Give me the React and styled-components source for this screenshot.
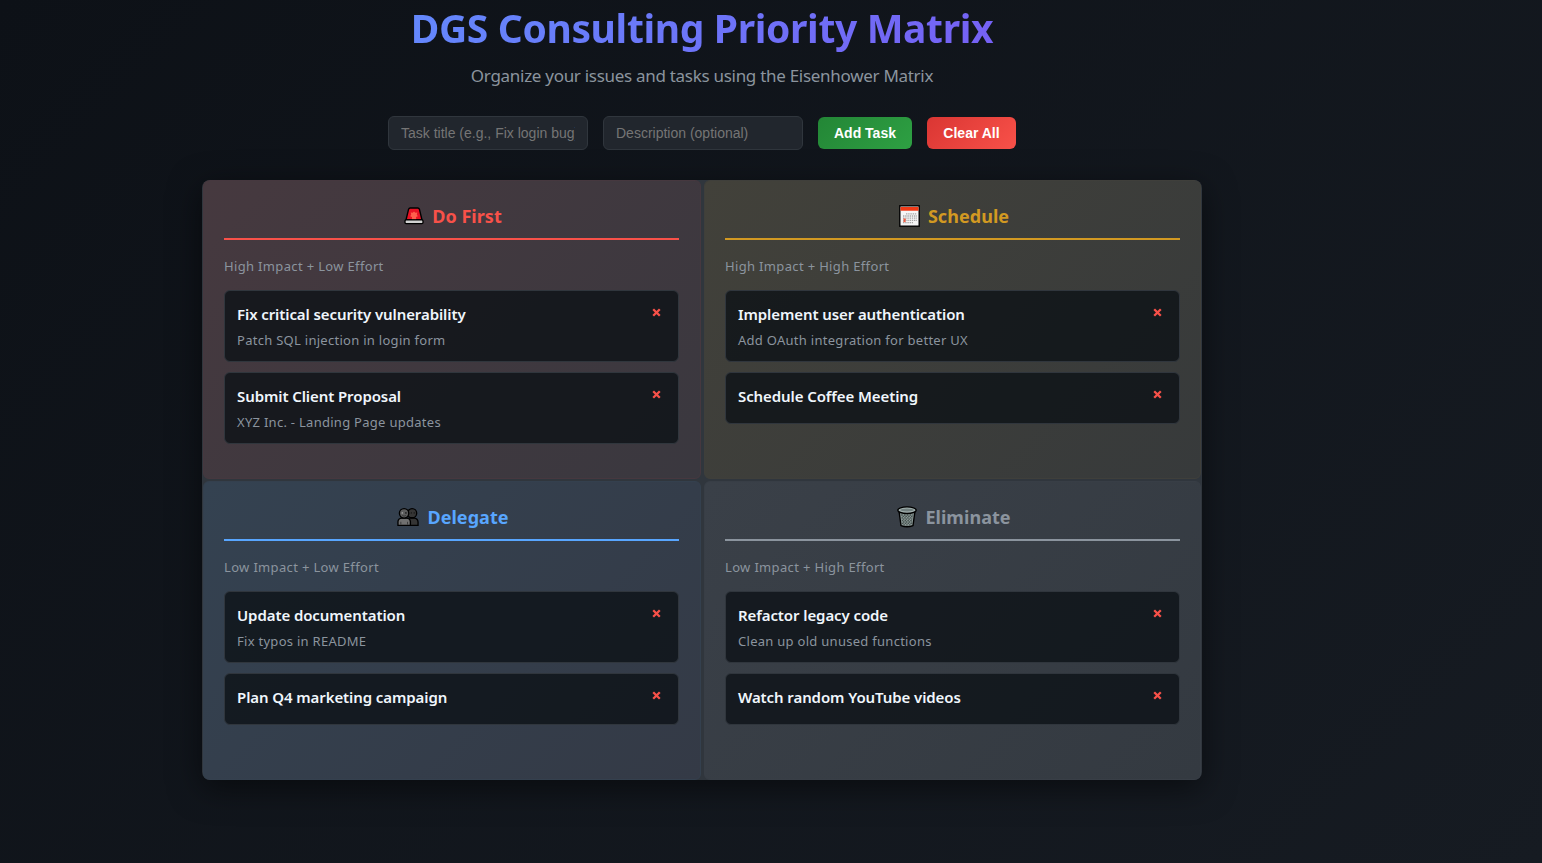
import React from "react";
import styled, { createGlobalStyle } from "styled-components";

const GlobalStyle = createGlobalStyle`
  * { box-sizing: border-box; }
  body {
    margin: 0;
    background: #11161d;
    color: #f0f6fc;
    font-family: "Noto Sans", "Open Sans", sans-serif;
  }
`;

const Page = styled.div`
  min-height: 863px;
  background: linear-gradient(135deg, #0d1117 0%, #161b22 100%);
`;

const Container = styled.main`
  width: 1404px;
  display: flex;
  flex-direction: column;
  align-items: center;
`;

const Title = styled.h1`
  margin: 0;
  width: 1000px;
  height: 60px;
  line-height: 56px;
  font-size: 39px;
  font-weight: 700;
  letter-spacing: -0.36px;
  text-align: center;
  white-space: nowrap;
  background: linear-gradient(135deg, #5d97ff 0%, #7c52f1 100%);
  background-clip: text;
  -webkit-background-clip: text;
  color: transparent;
`;

const Subtitle = styled.p`
  margin: 0 0 24px;
  height: 32px;
  line-height: 32px;
  font-size: 17px;
  letter-spacing: -0.29px;
  color: #8b949e;
  white-space: nowrap;
`;

const Controls = styled.form`
  display: flex;
  align-items: center;
  gap: 15px;
  margin: 0 0 30px;
`;

const Field = styled.input`
  width: 200px;
  height: 34px;
  padding: 0 12px;
  border: 1px solid #30363d;
  border-radius: 6px;
  background: #21262d;
  color: #f0f6fc;
  font-family: "Liberation Sans", Arial, sans-serif;
  font-size: 14px;
  outline: none;
  &::placeholder { color: #757575; opacity: 1; }
`;

const Button = styled.button`
  width: ${(p) => p.$width}px;
  height: 32px;
  padding: 0;
  border: 0;
  border-radius: 6px;
  background: linear-gradient(135deg, ${(p) => p.$from}, ${(p) => p.$to});
  color: #fff;
  font-family: "Liberation Sans", Arial, sans-serif;
  font-size: 14px;
  font-weight: 700;
  white-space: nowrap;
`;

const Matrix = styled.section`
  width: 1000px;
  height: 600px;
  display: grid;
  grid-template-columns: 498px 497px;
  grid-template-rows: 299px 299px;
  gap: 2px 3px;
  padding: 0 1px;
  border-radius: 8px;
  overflow: hidden;
  background: #30363d;
  box-shadow: 0 8px 32px rgba(0, 0, 0, 0.5);
`;

const Quadrant = styled.article`
  min-width: 0;
  padding: 21px 20px 20px;
  border: 1px solid ${(p) => p.$edge};
  border-radius: 6px;
  background: linear-gradient(135deg, ${(p) => p.$from}, ${(p) => p.$to});
  &:nth-child(odd) { padding-right: 21px; }
`;

const Heading = styled.h2`
  display: flex;
  align-items: center;
  justify-content: center;
  gap: 8px;
  height: 38px;
  margin: 0 0 15px;
  padding: 0 0 9px 3px;
  border-bottom: 2px solid ${(p) => p.$color};
  color: ${(p) => p.$color};
  font-size: 18px;
  font-weight: 700;
  line-height: 26px;
  letter-spacing: 0.05px;
  white-space: nowrap;
`;

const Hint = styled.p`
  margin: 0 0 13px;
  height: 22px;
  line-height: 22px;
  font-size: 13px;
  letter-spacing: 0.34px;
  color: #8b949e;
  white-space: nowrap;
`;

const Tasks = styled.div`
  display: flex;
  flex-direction: column;
  gap: 10.5px;
`;

const Card = styled.div`
  display: flex;
  justify-content: space-between;
  align-items: flex-start;
  height: ${(p) => (p.$tall ? 71.5 : 51.5)}px;
  padding: 11px 17.5px 0 12px;
  border: 1px solid #30363d;
  border-radius: 6px;
  background: rgba(13, 17, 23, 0.8);
`;

const TaskTitle = styled.div`
  height: 24px;
  line-height: 24px;
  font-size: 15px;
  font-weight: 600;
  letter-spacing: -0.09px;
  color: #f0f6fc;
  white-space: nowrap;
`;

const TaskNote = styled.div`
  margin-top: 2px;
  height: 24px;
  line-height: 24px;
  font-size: 13px;
  letter-spacing: 0.28px;
  color: #8b949e;
  white-space: nowrap;
`;

const Remove = styled.button`
  display: flex;
  margin-top: 5.5px;
  padding: 0;
  border: 0;
  background: none;
  color: #f85149;
`;

const Siren = () => (
  <svg width="20" height="18" viewBox="0 0 20 18">
    <path d="M4.6 2.2Q5 1 6.2 1h7.6q1.2 0 1.6 1.2L18 13H2z" fill="#e81224" stroke="#000" strokeWidth="1.4" strokeLinejoin="round" />
    <path d="M10 4.6l1.3 1.2 2-.2-.5 2 1 1.6-1.8.8.2 2.6H7.8l.2-2.6-1.8-.8 1-1.6-.5-2 2 .2z" fill="#ff5f4c" />
    <rect x="1" y="12.9" width="18" height="3.7" rx="1" fill="#d2d2d2" stroke="#000" strokeWidth="1.3" />
  </svg>
);

const Calendar = () => (
  <svg width="21" height="22" viewBox="0 0 21 22">
    <rect x=".8" y=".8" width="19.4" height="20.4" fill="#f5f5f5" stroke="#000" strokeWidth="1.4" />
    <path d="M1.5 2h18v3.8h-18z" fill="#f03a17" />
    <path d="M7 8.8h11M4 11h14M4 13.2h14M4 15.4h14M4 17.6h10" stroke="#a7a7a7" strokeWidth="1.3" strokeDasharray="1.4 .8" />
    <path d="M4.2 13.8l2.8 2.8M7 13.8l-2.8 2.8M5.6 13.4v3.8" stroke="#f0583d" strokeWidth="1" />
  </svg>
);

const People = () => (
  <svg width="22" height="20" viewBox="0 0 23 20">
    <g stroke="#000" strokeWidth="1.4">
      <path d="M9 18.8v-4q0-3 3-3.6h6q3.8.4 4 4v3.6z" fill="#353535" />
      <circle cx="15.8" cy="6" r="4.8" fill="#353535" />
      <path d="M1 18.8v-4q.2-3.3 4-3.6h5q3.8.3 4 3.6v4z" fill="#707070" />
      <circle cx="7.4" cy="6.2" r="4.9" fill="#5c5c5c" />
    </g>
    <circle cx="5.6" cy="5.7" r=".9" fill="#9a9a9a" />
    <circle cx="9.3" cy="5.7" r=".9" fill="#222" />
    <circle cx="15" cy="5.7" r=".7" fill="#111" />
    <circle cx="18" cy="5.7" r=".7" fill="#111" />
    <path d="M5.5 8.4q1.9 1.5 3.8 0M4 15v3M11 15v3" stroke="#333" strokeWidth=".9" fill="none" />
  </svg>
);

const Bin = () => (
  <svg width="20" height="22" viewBox="0 0 20 22">
    <path d="M2 5l2 14.6q6 2.4 12 0L18 5z" fill="#8a9896" stroke="#000" strokeWidth="1.4" />
    <path d="M4.2 9h12M4.5 11.8h11.5M4.8 14.6h11M5 17.4h10" stroke="#46514f" strokeWidth="1.3" strokeDasharray="1.5 1.3" />
    <path d="M5.6 10.4h10M5.8 13.2h9.4M6 16h9M6.4 18.8h7" stroke="#46514f" strokeWidth="1.3" strokeDasharray="1.5 1.3" />
    <ellipse cx="10" cy="4.2" rx="9.2" ry="3.3" fill="#a3b1b0" stroke="#000" strokeWidth="1.4" />
    <ellipse cx="10" cy="4" rx="6.8" ry="1.5" fill="#72807f" />
  </svg>
);

const Cross = () => (
  <svg width="9" height="9" viewBox="0 0 9 9">
    <path d="M1.2 1.2l6.6 6.6M7.8 1.2L1.2 7.8" stroke="currentColor" strokeWidth="2.3" />
  </svg>
);

const quadrants = [
  {
    name: "Do First", Icon: Siren, color: "#f85149", from: "#46393f", to: "#3a383f", edge: "#46383f",
    hint: "High Impact + Low Effort",
    tasks: [
      ["Fix critical security vulnerability", "Patch SQL injection in login form"],
      ["Submit Client Proposal", "XYZ Inc. - Landing Page updates"],
    ],
  },
  {
    name: "Schedule", Icon: Calendar, color: "#d29922", from: "#42413a", to: "#373a3b", edge: "#3f3f3b",
    hint: "High Impact + High Effort",
    tasks: [
      ["Implement user authentication", "Add OAuth integration for better UX"],
      ["Schedule Coffee Meeting"],
    ],
  },
  {
    name: "Delegate", Icon: People, color: "#58a6ff", from: "#344251", to: "#343a46", edge: "#34404e",
    hint: "Low Impact + Low Effort",
    tasks: [
      ["Update documentation", "Fix typos in README"],
      ["Plan Q4 marketing campaign"],
    ],
  },
  {
    name: "Eliminate", Icon: Bin, color: "#8b949e", from: "#3a4048", to: "#343a41", edge: "#383e46",
    hint: "Low Impact + High Effort",
    tasks: [
      ["Refactor legacy code", "Clean up old unused functions"],
      ["Watch random YouTube videos"],
    ],
  },
];

export default function App() {
  return (
    <Page>
      <GlobalStyle />
      <Container>
        <Title>DGS Consulting Priority Matrix</Title>
        <Subtitle>Organize your issues and tasks using the Eisenhower Matrix</Subtitle>
        <Controls>
          <Field placeholder="Task title (e.g., Fix login bug)" />
          <Field placeholder="Description (optional)" />
          <Button type="button" $width={94} $from="#238636" $to="#2ea043">Add Task</Button>
          <Button type="button" $width={89} $from="#da3633" $to="#f85149">Clear All</Button>
        </Controls>
        <Matrix>
          {quadrants.map(({ name, Icon, color, from, to, edge, hint, tasks }) => (
            <Quadrant key={name} $from={from} $to={to} $edge={edge}>
              <Heading $color={color}>
                <Icon />
                <span>{name}</span>
              </Heading>
              <Hint>{hint}</Hint>
              <Tasks>
                {tasks.map(([title, note]) => (
                  <Card key={title} $tall={Boolean(note)}>
                    <div>
                      <TaskTitle>{title}</TaskTitle>
                      {note && <TaskNote>{note}</TaskNote>}
                    </div>
                    <Remove type="button" aria-label={`Remove ${title}`}><Cross /></Remove>
                  </Card>
                ))}
              </Tasks>
            </Quadrant>
          ))}
        </Matrix>
      </Container>
    </Page>
  );
}
